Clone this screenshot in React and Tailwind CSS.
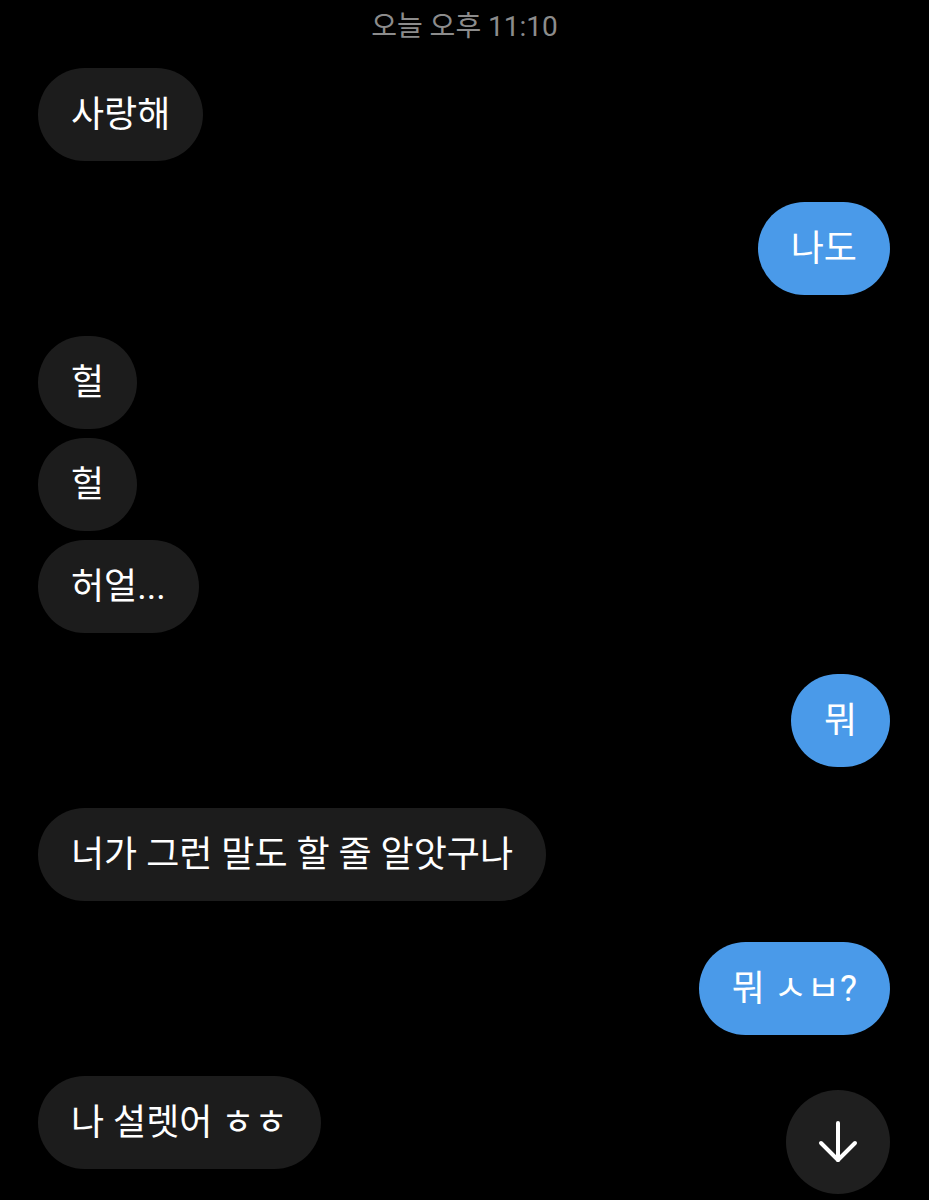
import React from 'react'

const groups = [
  { me: false, texts: ['사랑해'] },
  { me: true, texts: ['나도'] },
  { me: false, texts: ['헐', '헐', '허얼...'] },
  { me: true, texts: ['뭐'] },
  { me: false, texts: ['너가 그런 말도 할 줄 알앗구나'] },
  { me: true, texts: ['뭐 ㅅㅂ?'] },
  { me: false, texts: ['나 설렛어 ㅎㅎ'] },
]

function Bubble({ me, text }) {
  return (
    <div className={`flex ${me ? 'justify-end' : 'justify-start'}`}>
      <div
        className={`h-[93px] min-w-[99px] px-[33px] rounded-full flex items-center justify-center text-[36px] text-white whitespace-nowrap ${
          me ? 'bg-[#4a9ae9]' : 'bg-[#1c1c1c]'
        }`}
      >
        {text}
      </div>
    </div>
  )
}

export default function App() {
  return (
    <div
      className="relative w-[929px] h-[1200px] bg-black overflow-hidden"
      style={{ fontFamily: 'Roboto, "Noto Sans CJK KR", sans-serif' }}
    >
      <div className="h-[50px] flex items-start justify-center pt-[6px] text-[28px] text-[#8c8c8c]">
        오늘 오후 11:10
      </div>
      <div className="flex flex-col gap-[41px] pl-[38px] pr-[39px] pt-[18px]">
        {groups.map((g, i) => (
          <div key={i} className="flex flex-col gap-[9px]">
            {g.texts.map((t, j) => (
              <Bubble key={j} me={g.me} text={t} />
            ))}
          </div>
        ))}
      </div>
      <button className="absolute left-[786px] top-[1090px] w-[104px] h-[104px] rounded-full bg-[#1f1f1f] flex items-center justify-center">
        <svg width="40" height="44" viewBox="0 0 40 44" fill="none" stroke="white" strokeWidth="4" strokeLinecap="round" strokeLinejoin="round">
          <path d="M20 3v37" />
          <path d="M3 23l17 17 17-17" />
        </svg>
      </button>
    </div>
  )
}
